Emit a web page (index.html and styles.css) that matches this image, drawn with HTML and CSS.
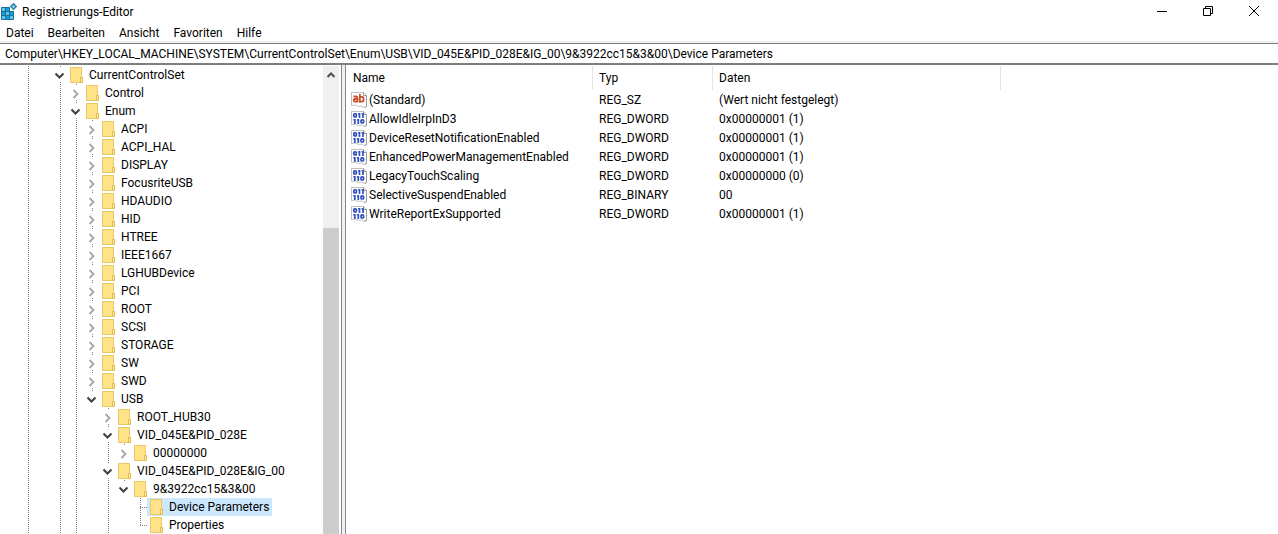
FILE: index.html
```html
<!DOCTYPE html>
<html lang="de">
<head>
    <meta charset="UTF-8">
    <meta name="viewport" content="width=device-width, initial-scale=1.0">
    <title>Registrierungs-Editor</title>
    <link rel="stylesheet" href="styles.css">
</head>
<body>
    <!-- Symbole -->
    <svg class="symbols" aria-hidden="true">
        <symbol id="folder" viewBox="0 0 16 18">
            <path d="M1.5 1.5h11v10h1v5h-12z" fill="#ffe28a" stroke="#e9c765"/>
            <path d="M11.5 11.5h2v5h-2z" fill="#ffe9a3" stroke="#e3bc4f"/>
        </symbol>
        <symbol id="closed" viewBox="0 0 16 18">
            <path d="M5.5 6l4 4-4 4" fill="none" stroke="#a6a6a6" stroke-width="1.8"/>
        </symbol>
        <symbol id="open" viewBox="0 0 16 18">
            <path d="M3.5 7.5l4 4 4-4" fill="none" stroke="#404040" stroke-width="2"/>
        </symbol>
        <symbol id="page" viewBox="0 0 16 16">
            <path d="M.5.5h12l3 3v11l-2 1-3-1.5-3 .5-3-1.5-4 .5z" fill="#fff" stroke="#c0c0c0"/>
            <path d="M12.5.5v3h3v11l-2 1" fill="none" stroke="#9c9c9c"/>
        </symbol>
        <symbol id="string" viewBox="0 0 16 16">
            <use href="#page"/>
            <g fill="none" stroke="#c8502d" stroke-width="1.8">
                <path d="M2.5 4.5h2.5q1.500 0 1.500 1.500v4.500M6.500 7h-2.500q-1.300 0-1.300 1.300t1.300 1.300h2.500"/>
                <path d="M8.900 2v8.500M8.900 4.900h2q1.600 0 1.600 1.600v1.500q0 1.600-1.600 1.600h-2"/>
            </g>
        </symbol>
        <symbol id="binary" viewBox="0 0 16 16">
            <use href="#page"/>
            <g fill="none" stroke="#2f4fc0" stroke-width="1.7">
                <rect x="2.800" y="2.800" width="2.600" height="3.200" rx="1"/>
                <rect x="10" y="8.800" width="2.600" height="3.200" rx="1"/>
                <path d="M8.500 2v5M12 2v5M3.800 8v5M7.300 8v5"/>
                <path d="M7 2.800h1.500M10.500 2.800h1.500M2.300 8.800h1.500M5.800 8.800h1.500" stroke-width="1.200"/>
            </g>
        </symbol>
    </svg>

    <div class="window">
        <header class="titlebar">
            <svg class="app-icon" viewBox="0 0 16 18" aria-hidden="true">
                <path d="M.5 4.500h8v4h4v8h-12z" fill="#5cc8f2" stroke="#1a6f9b"/>
                <path d="M1 9h3v3h-3zM5 13h3v3h-3zM5 5h3v3h-3zM9 9h3v3h-3z" fill="#1c9bd8"/>
                <path d="M4.500 4.500v12M8.500 8.500v8M.5 8.500h12M.5 12.500h12" stroke="#1a6f9b" fill="none"/>
                <path d="M12.500.8l2.700 2.700-2.700 2.700-2.700-2.700z" fill="#8ad8f5" stroke="#3383a8" stroke-width="1.500"/>
            </svg>
            <h1 class="title">Registrierungs-Editor</h1>
            <div class="window-buttons">
                <button type="button" aria-label="Minimieren">
                    <svg viewBox="0 0 12 12"><path d="M1 6.500h10"/></svg>
                </button>
                <button type="button" aria-label="Verkleinern">
                    <svg viewBox="0 0 12 12"><path d="M1.500 3.500h7v7h-7zM3.500 3.500v-2h7v7h-2"/></svg>
                </button>
                <button type="button" aria-label="Schließen">
                    <svg viewBox="0 0 12 12"><path d="M1 1l10 10M11 1l-10 10"/></svg>
                </button>
            </div>
        </header>

        <nav class="menubar">
            <button type="button">Datei</button>
            <button type="button">Bearbeiten</button>
            <button type="button">Ansicht</button>
            <button type="button">Favoriten</button>
            <button type="button">Hilfe</button>
        </nav>

        <input class="address" type="text" aria-label="Adresse" value="Computer\HKEY_LOCAL_MACHINE\SYSTEM\CurrentControlSet\Enum\USB\VID_045E&amp;PID_028E&amp;IG_00\9&amp;3922cc15&amp;3&amp;00\Device Parameters">

        <main class="panes">
            <div class="tree-pane">
                <ul class="tree">
                    <li>
                        <div class="row"><button class="toggle" type="button" aria-label="Reduzieren"><svg><use href="#open"/></svg></button><span class="key"><svg><use href="#folder"/></svg>CurrentControlSet</span></div>
                        <ul>
                            <li><div class="row"><button class="toggle" type="button" aria-label="Erweitern"><svg><use href="#closed"/></svg></button><span class="key"><svg><use href="#folder"/></svg>Control</span></div></li>
                            <li>
                                <div class="row"><button class="toggle" type="button" aria-label="Reduzieren"><svg><use href="#open"/></svg></button><span class="key"><svg><use href="#folder"/></svg>Enum</span></div>
                                <ul>
                                    <li><div class="row"><button class="toggle" type="button" aria-label="Erweitern"><svg><use href="#closed"/></svg></button><span class="key"><svg><use href="#folder"/></svg>ACPI</span></div></li>
                                    <li><div class="row"><button class="toggle" type="button" aria-label="Erweitern"><svg><use href="#closed"/></svg></button><span class="key"><svg><use href="#folder"/></svg>ACPI_HAL</span></div></li>
                                    <li><div class="row"><button class="toggle" type="button" aria-label="Erweitern"><svg><use href="#closed"/></svg></button><span class="key"><svg><use href="#folder"/></svg>DISPLAY</span></div></li>
                                    <li><div class="row"><button class="toggle" type="button" aria-label="Erweitern"><svg><use href="#closed"/></svg></button><span class="key"><svg><use href="#folder"/></svg>FocusriteUSB</span></div></li>
                                    <li><div class="row"><button class="toggle" type="button" aria-label="Erweitern"><svg><use href="#closed"/></svg></button><span class="key"><svg><use href="#folder"/></svg>HDAUDIO</span></div></li>
                                    <li><div class="row"><button class="toggle" type="button" aria-label="Erweitern"><svg><use href="#closed"/></svg></button><span class="key"><svg><use href="#folder"/></svg>HID</span></div></li>
                                    <li><div class="row"><button class="toggle" type="button" aria-label="Erweitern"><svg><use href="#closed"/></svg></button><span class="key"><svg><use href="#folder"/></svg>HTREE</span></div></li>
                                    <li><div class="row"><button class="toggle" type="button" aria-label="Erweitern"><svg><use href="#closed"/></svg></button><span class="key"><svg><use href="#folder"/></svg>IEEE1667</span></div></li>
                                    <li><div class="row"><button class="toggle" type="button" aria-label="Erweitern"><svg><use href="#closed"/></svg></button><span class="key"><svg><use href="#folder"/></svg>LGHUBDevice</span></div></li>
                                    <li><div class="row"><button class="toggle" type="button" aria-label="Erweitern"><svg><use href="#closed"/></svg></button><span class="key"><svg><use href="#folder"/></svg>PCI</span></div></li>
                                    <li><div class="row"><button class="toggle" type="button" aria-label="Erweitern"><svg><use href="#closed"/></svg></button><span class="key"><svg><use href="#folder"/></svg>ROOT</span></div></li>
                                    <li><div class="row"><button class="toggle" type="button" aria-label="Erweitern"><svg><use href="#closed"/></svg></button><span class="key"><svg><use href="#folder"/></svg>SCSI</span></div></li>
                                    <li><div class="row"><button class="toggle" type="button" aria-label="Erweitern"><svg><use href="#closed"/></svg></button><span class="key"><svg><use href="#folder"/></svg>STORAGE</span></div></li>
                                    <li><div class="row"><button class="toggle" type="button" aria-label="Erweitern"><svg><use href="#closed"/></svg></button><span class="key"><svg><use href="#folder"/></svg>SW</span></div></li>
                                    <li><div class="row"><button class="toggle" type="button" aria-label="Erweitern"><svg><use href="#closed"/></svg></button><span class="key"><svg><use href="#folder"/></svg>SWD</span></div></li>
                                    <li class="last">
                                        <div class="row"><button class="toggle" type="button" aria-label="Reduzieren"><svg><use href="#open"/></svg></button><span class="key"><svg><use href="#folder"/></svg>USB</span></div>
                                        <ul>
                                            <li><div class="row"><button class="toggle" type="button" aria-label="Erweitern"><svg><use href="#closed"/></svg></button><span class="key"><svg><use href="#folder"/></svg>ROOT_HUB30</span></div></li>
                                            <li>
                                                <div class="row"><button class="toggle" type="button" aria-label="Reduzieren"><svg><use href="#open"/></svg></button><span class="key"><svg><use href="#folder"/></svg>VID_045E&amp;PID_028E</span></div>
                                                <ul>
                                                    <li class="last"><div class="row"><button class="toggle" type="button" aria-label="Erweitern"><svg><use href="#closed"/></svg></button><span class="key"><svg><use href="#folder"/></svg>00000000</span></div></li>
                                                </ul>
                                            </li>
                                            <li>
                                                <div class="row"><button class="toggle" type="button" aria-label="Reduzieren"><svg><use href="#open"/></svg></button><span class="key"><svg><use href="#folder"/></svg>VID_045E&amp;PID_028E&amp;IG_00</span></div>
                                                <ul>
                                                    <li class="last">
                                                        <div class="row"><button class="toggle" type="button" aria-label="Reduzieren"><svg><use href="#open"/></svg></button><span class="key"><svg><use href="#folder"/></svg>9&amp;3922cc15&amp;3&amp;00</span></div>
                                                        <ul>
                                                            <li><div class="row"><span class="leaf"></span><span class="key selected"><svg><use href="#folder"/></svg>Device Parameters</span></div></li>
                                                            <li class="last"><div class="row"><span class="leaf"></span><span class="key"><svg><use href="#folder"/></svg>Properties</span></div></li>
                                                        </ul>
                                                    </li>
                                                </ul>
                                            </li>
                                        </ul>
                                    </li>
                                </ul>
                            </li>
                        </ul>
                    </li>
                </ul>
                <div class="scrollbar">
                    <button type="button" aria-label="Nach oben">
                        <svg viewBox="0 0 10 8"><path d="M1.500 6l3.500-3.500 3.500 3.500"/></svg>
                    </button>
                    <div class="thumb"></div>
                </div>
            </div>

            <div class="splitter"></div>

            <div class="list-pane">
                <table class="values">
                    <colgroup>
                        <col class="col-name">
                        <col class="col-type">
                        <col class="col-data">
                        <col>
                    </colgroup>
                    <thead>
                        <tr><th>Name</th><th>Typ</th><th>Daten</th><td></td></tr>
                    </thead>
                    <tbody>
                        <tr><td><span class="value"><svg><use href="#string"/></svg>(Standard)</span></td><td>REG_SZ</td><td>(Wert nicht festgelegt)</td><td></td></tr>
                        <tr><td><span class="value"><svg><use href="#binary"/></svg>AllowIdleIrpInD3</span></td><td>REG_DWORD</td><td>0x00000001 (1)</td><td></td></tr>
                        <tr><td><span class="value"><svg><use href="#binary"/></svg>DeviceResetNotificationEnabled</span></td><td>REG_DWORD</td><td>0x00000001 (1)</td><td></td></tr>
                        <tr><td><span class="value"><svg><use href="#binary"/></svg>EnhancedPowerManagementEnabled</span></td><td>REG_DWORD</td><td>0x00000001 (1)</td><td></td></tr>
                        <tr><td><span class="value"><svg><use href="#binary"/></svg>LegacyTouchScaling</span></td><td>REG_DWORD</td><td>0x00000000 (0)</td><td></td></tr>
                        <tr><td><span class="value"><svg><use href="#binary"/></svg>SelectiveSuspendEnabled</span></td><td>REG_BINARY</td><td>00</td><td></td></tr>
                        <tr><td><span class="value"><svg><use href="#binary"/></svg>WriteReportExSupported</span></td><td>REG_DWORD</td><td>0x00000001 (1)</td><td></td></tr>
                    </tbody>
                </table>
            </div>
        </main>
    </div>
</body>
</html>
```
FILE: styles.css
```css
* {
    box-sizing: border-box;
}
body {
    margin: 0;
    background-color: #fff;
    color: #000;
    font-family: Roboto, "Open Sans", sans-serif;
    font-size: 12px;
    line-height: 16px;
}
button, input {
    font: inherit;
    color: inherit;
}
button {
    padding: 0;
    border: none;
    background: none;
}
.symbols {
    display: none;
}
.window {
    display: flex;
    flex-direction: column;
    height: 100vh;
    overflow: hidden;
}

/* Titelleiste */
.titlebar {
    display: flex;
    align-items: center;
    height: 24px;
    padding: 0 1px;
}
.app-icon {
    width: 16px;
    height: 18px;
    margin-right: 5px;
}
.title {
    flex: 1;
    margin: 0;
    font-size: 12px;
    font-weight: normal;
}
.window-buttons {
    display: flex;
    align-self: flex-start;
}
.window-buttons button {
    display: flex;
    align-items: center;
    justify-content: center;
    width: 46px;
    height: 21px;
}
.window-buttons svg {
    width: 12px;
    height: 12px;
    fill: none;
    stroke: #000;
}

/* Menü */
.menubar {
    display: flex;
    gap: 14px;
    height: 19px;
    padding-left: 6px;
    border-bottom: 2px solid #f0f0f0;
}
.address {
    width: 100%;
    height: 22px;
    padding: 0 5px;
    border: solid #7f7f7f;
    border-width: 1px 0 2px;
    border-radius: 0;
    outline: none;
}

/* Baum */
.panes {
    display: flex;
    flex: 1;
    min-height: 0;
    padding-top: 1px;
}
.tree-pane {
    display: flex;
    width: 341px;
    padding-right: 2px;
    overflow: hidden;
}
.tree, .tree ul {
    margin: 0;
    padding: 0;
    list-style: none;
}
.tree {
    flex: 1;
    padding-left: 52px;
    background: repeating-linear-gradient(#808080 0 1px, transparent 1px 2px) 28px 0 / 1px 100% no-repeat;
}
.tree ul {
    margin-left: 16px;
}
.tree li {
    background: repeating-linear-gradient(#808080 0 1px, transparent 1px 2px) 8px 0 / 1px 100% no-repeat;
}
.tree .last {
    background-size: 1px 10px;
}
.row {
    display: flex;
    align-items: center;
    height: 18px;
}
.toggle {
    width: 15px;
    height: 14px;
    background-color: #fff;
    overflow: hidden;
    display: flex;
    align-items: center;
}
.toggle svg {
    flex: none;
    width: 16px;
    height: 18px;
}
.leaf {
    width: 15px;
    height: 18px;
    background: repeating-linear-gradient(90deg, #808080 0 1px, transparent 1px 2px) 8px 9px / 7px 1px no-repeat;
}
.key {
    display: flex;
    align-items: center;
    gap: 4px;
    height: 18px;
    padding: 0 3px 0 2px;
    white-space: nowrap;
}
.key svg {
    width: 16px;
    height: 18px;
}
.selected {
    background-color: #cce8ff;
}

/* Bildlaufleiste */
.scrollbar {
    display: flex;
    flex-direction: column;
    width: 16px;
    background-color: #f0f0f0;
}
.scrollbar button {
    display: flex;
    align-items: center;
    justify-content: center;
    height: 18px;
}
.scrollbar svg {
    width: 10px;
    height: 8px;
    fill: none;
    stroke: #505050;
    stroke-width: 2;
}
.thumb {
    flex: 1;
    margin-top: 144px;
    background-color: #cdcdcd;
}
.splitter {
    width: 5px;
    margin-top: -1px;
    border: solid #828790;
    border-width: 0 1px;
    background-color: #f0f0f0;
}

/* Werteliste */
.list-pane {
    flex: 1;
    overflow: hidden;
}
.values {
    width: 100%;
    table-layout: fixed;
    border-spacing: 0;
}
.col-name {
    width: 247px;
}
.col-type {
    width: 120px;
}
.col-data {
    width: 288px;
}
.values th, .values td {
    height: 19px;
    padding: 0 6px;
    font-weight: normal;
    text-align: left;
    line-height: 18px;
    white-space: nowrap;
}
.values thead th {
    height: 24px;
    border-right: 1px solid #e5e5e5;
}
.values th:first-child {
    padding-left: 7px;
}
.values td:first-child {
    padding-left: 5px;
}
.value {
    display: flex;
    align-items: center;
    gap: 2px;
}
.value svg {
    width: 16px;
    height: 16px;
}
```
